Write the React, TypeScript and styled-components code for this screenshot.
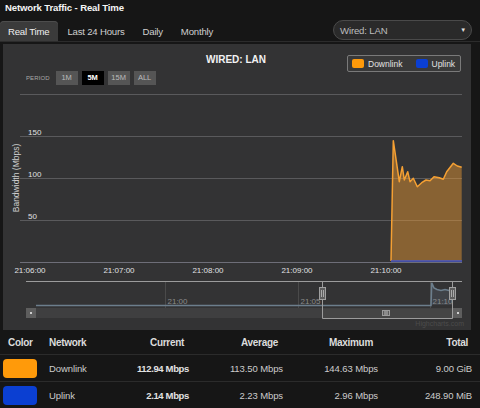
import React from 'react';
import styled, { createGlobalStyle } from 'styled-components';

const GlobalStyle = createGlobalStyle`
  html, body { margin: 0; padding: 0; background: #161616; }
  body { font-family: "Liberation Sans", Arial, sans-serif; color: #ccc; }
`;

const Page = styled.div`
  width: 480px;
  height: 408px;
  overflow: hidden;
  background: #161616;
`;

const Title = styled.div`
  height: 17px;
  box-sizing: border-box;
  padding: 1px 0 0 5px;
  font-size: 9.6px;
  line-height: 13px;
  letter-spacing: -0.15px;
  font-weight: bold;
  color: #f4f4f4;
`;

const TabBar = styled.div`
  height: 25px;
  box-sizing: border-box;
  display: flex;
  align-items: flex-end;
  justify-content: space-between;
  border-bottom: 1px solid #2c2c2c;
`;

const Tabs = styled.div`
  display: flex;
  align-items: flex-end;
`;

const Tab = styled.div<{ $active?: boolean }>`
  height: 20px;
  line-height: 21px;
  padding: 0 9px 0 8px;
  margin-right: 1px;
  font-size: 9.6px;
  letter-spacing: -0.2px;
  color: ${(p) => (p.$active ? '#f0f0f0' : '#cfcfcf')};
  background: ${(p) => (p.$active ? '#3b3b3b' : 'transparent')};
  border-radius: 4px 4px 0 0;
  box-shadow: ${(p) => (p.$active ? 'inset 0 1px 0 #4d4d4d' : 'none')};
`;

const Dropdown = styled.div`
  width: 139px;
  height: 20px;
  box-sizing: border-box;
  margin: 0 8px 1px 0;
  padding: 0 5px 0 6px;
  display: flex;
  align-items: center;
  justify-content: space-between;
  border: 1px solid #4a4a4a;
  border-radius: 10px;
  background: #2a2a2a;
  font-size: 9.6px;
  letter-spacing: -0.15px;
  color: #bdbdbd;
`;

const Caret = styled.span`
  font-size: 6px;
  color: #e0e0e0;
`;

const Panel = styled.div`
  margin: 2px 0 0 3px;
  width: 468px;
  height: 286px;
  background: #333334;
  display: flex;
  flex-direction: column;
`;

const ChartHeader = styled.div`
  height: 44px;
  box-sizing: border-box;
  padding: 9px 10px 0 10px;
  display: grid;
  grid-template-columns: 1fr;
  grid-template-rows: 16px 14px;
  row-gap: 2px;
`;

const ChartTitle = styled.div`
  grid-area: 1 / 1;
  justify-self: center;
  margin-right: 2px;
  font-size: 10px;
  line-height: 14px;
  font-weight: bold;
  color: #f2f2f2;
`;

const Legend = styled.div`
  grid-area: 1 / 1 / span 2 / 1;
  justify-self: end;
  align-self: start;
  margin-top: 2px;
  width: 114px;
  height: 17px;
  box-sizing: border-box;
  padding: 0 4px;
  display: flex;
  align-items: center;
  border: 1px solid #7a7a7a;
  border-radius: 2px;
  background: #393939;
  font-size: 8.5px;
  color: #e2e2e2;
`;

const LegendItem = styled.span`
  display: flex;
  align-items: center;
  gap: 4px;
  & + & { margin-left: 13px; }
`;

const LegendSwatch = styled.span<{ $color: string }>`
  width: 12px;
  height: 9px;
  border-radius: 2px;
  background: ${(p) => p.$color};
`;

const PeriodRow = styled.div`
  grid-area: 2 / 1;
  justify-self: start;
  margin-left: 13px;
  display: flex;
  align-items: center;
  gap: 4px;
`;

const PeriodLabel = styled.span`
  font-size: 6px;
  letter-spacing: 0.1px;
  color: #a8a8a8;
  margin-right: 2px;
`;

const PeriodButton = styled.span<{ $active?: boolean }>`
  width: 22px;
  height: 14px;
  line-height: 14px;
  text-align: center;
  font-size: 7.5px;
  font-weight: ${(p) => (p.$active ? 'bold' : 'normal')};
  color: ${(p) => (p.$active ? '#ffffff' : '#bcbcbc')};
  background: ${(p) => (p.$active ? '#000000' : '#555555')};
`;

const ChartSvg = styled.svg`
  display: block;
  font-family: "Liberation Sans", Arial, sans-serif;
`;

const Table = styled.table`
  margin-top: 1px;
  width: 480px;
  border-collapse: collapse;
  table-layout: fixed;
  font-size: 9.5px;
  letter-spacing: -0.1px;
  color: #cfcfcf;
`;

const HeadCell = styled.th<{ $align?: string; $pad?: string }>`
  height: 23px;
  padding: ${(p) => p.$pad || '0 8px 0 0'};
  text-align: ${(p) => p.$align || 'right'};
  font-size: 10px;
  letter-spacing: -0.3px;
  font-weight: bold;
  color: #dcdcdc;
  border-bottom: 1px solid #2b2b2b;
`;

const Cell = styled.td<{ $align?: string; $pad?: string; $bold?: boolean }>`
  height: 26px;
  padding: ${(p) => p.$pad || '0 3px 0 0'};
  text-align: ${(p) => p.$align || 'right'};
  font-weight: ${(p) => (p.$bold ? 'bold' : 'normal')};
  letter-spacing: ${(p) => (p.$bold ? '-0.35px' : '-0.1px')};
  color: ${(p) => (p.$bold ? '#e2e2e2' : '#cccccc')};
  border-bottom: 1px solid #2b2b2b;
`;

const Swatch = styled.div<{ $color: string }>`
  width: 34px;
  height: 19px;
  border-radius: 4px;
  background: ${(p) => p.$color};
`;

const ORANGE = '#ff9a0a';
const BLUE = '#0b3fd2';

const downlink: [number, number][] = [
  [393.3, 140.7], [399.3, 181.7], [402.3, 166.7], [404.3, 180], [407.7, 171.7],
  [410, 181.7], [413.3, 178.3], [417.3, 186.7], [421.7, 182.7], [426, 180],
  [430, 180.7], [434, 176.7], [439.3, 177.7], [443.3, 179.3], [446.7, 171.7],
  [453.3, 163.3], [457.3, 166], [461.7, 167.3],
];

const lineD = 'M391 261 ' + downlink.map(([x, y]) => `L${x} ${y}`).join(' ');
const areaD = lineD + ' L461.7 261 Z';

const yTicks = [
  { y: 136.5, label: '150' },
  { y: 178.5, label: '100' },
  { y: 220.5, label: '50' },
];

const xTicks = [
  { x: 30, label: '21:06:00' },
  { x: 119, label: '21:07:00' },
  { x: 208, label: '21:08:00' },
  { x: 297, label: '21:09:00' },
  { x: 386, label: '21:10:00' },
];

const navTicks = [
  { x: 165.5, label: '21:00' },
  { x: 298.5, label: '21:05' },
  { x: 430.5, label: '21:10' },
];

const Handle = ({ x }: { x: number }) => (
  <g>
    <rect x={x - 3} y={287.5} width={6} height={12} fill="#5e5e5e" stroke="#a0a0a0" />
    <line x1={x - 1} y1={290} x2={x - 1} y2={297} stroke="#aaa" />
    <line x1={x + 1} y1={290} x2={x + 1} y2={297} stroke="#aaa" />
  </g>
);

const Chart = () => (
  <ChartSvg width={468} height={242} viewBox="3 88 468 242">
    {[94.5, 136.5, 178.5, 220.5].map((y) => (
      <line key={y} x1={20} y1={y} x2={462} y2={y} stroke="#5a5a5c" />
    ))}
    <line x1={20} y1={262.5} x2={462} y2={262.5} stroke="#6e6e78" />
    {yTicks.map((t) => (
      <text key={t.label} x={28} y={t.y - 2} fontSize={8} fill="#e0e0e3">
        {t.label}
      </text>
    ))}
    {xTicks.map((t) => (
      <text key={t.label} x={t.x} y={273} fontSize={8} fill="#e0e0e3" textAnchor="middle">
        {t.label}
      </text>
    ))}
    <text
      x={19}
      y={178}
      fontSize={8.5}
      fill="#cfcfcf"
      textAnchor="middle"
      transform="rotate(-90 19 178)"
    >
      Bandwidth (Mbps)
    </text>

    <path d={areaD} fill="rgba(240,155,50,0.45)" />
    <path d={lineD} fill="none" stroke="#f5a033" strokeWidth={1.5} strokeLinejoin="round" />
    <line x1={391} y1={261} x2={462} y2={261} stroke="#4a58c8" strokeWidth={1.5} />

    {/* navigator */}
    {navTicks.map((t) => (
      <g key={t.label}>
        <line x1={t.x} y1={281} x2={t.x} y2={308} stroke="#4a4a4a" />
        <text x={t.x + 2} y={304} fontSize={8} fill="#8a8a8a">
          {t.label}
        </text>
      </g>
    ))}
    <path
      d="M431 305 L431.7 282.7 L434 288 L437 289.5 L441 290.5 L445 289.5 L449 290.5 L452 290 L452 305 Z"
      fill="rgba(120,140,160,0.18)"
    />
    <path
      d="M36 305.5 H431 L431.7 282.7 L434 288 L437 289.5 L441 290.5 L445 289.5 L449 290.5 L452 290"
      fill="none"
      stroke="#6c7e8c"
      strokeWidth={1.6}
    />

    {/* scrollbar */}
    <rect x={36} y={308} width={420} height={10} fill="#3f3f40" />
    <rect x={26} y={308} width={10} height={10} fill="#5e5e5e" />
    <rect x={30} y={312} width={2} height={2} fill="#cfcfcf" />
    <rect x={453} y={308} width={9} height={10} fill="#5e5e5e" />
    <rect x={457} y={312} width={2} height={2} fill="#cfcfcf" />
    <rect x={322.5} y={308.5} width={130} height={9.5} fill="#454545" />
    <rect x={382.5} y={310.5} width={7} height={5} fill="#5a5a5a" stroke="#9a9a9a" />
    <line x1={385} y1={311} x2={385} y2={315} stroke="#bbb" />
    <line x1={387} y1={311} x2={387} y2={315} stroke="#bbb" />

    <path
      d="M26 281.5 H462 M322.5 281.5 V318.5 H452.5 V281.5"
      fill="none"
      stroke="#9c9c9c"
    />
    <Handle x={322.5} />
    <Handle x={452.5} />

    <text x={464} y={326} fontSize={7} fill="#4c4c4c" textAnchor="end">
      Highcharts.com
    </text>
  </ChartSvg>
);

const rows = [
  {
    color: ORANGE,
    name: 'Downlink',
    current: '112.94 Mbps',
    average: '113.50 Mbps',
    maximum: '144.63 Mbps',
    total: '9.00 GiB',
  },
  {
    color: BLUE,
    name: 'Uplink',
    current: '2.14 Mbps',
    average: '2.23 Mbps',
    maximum: '2.96 Mbps',
    total: '248.90 MiB',
  },
];

export default function App() {
  return (
    <Page>
      <GlobalStyle />
      <Title>Network Traffic - Real Time</Title>
      <TabBar>
        <Tabs>
          <Tab $active>Real Time</Tab>
          <Tab>Last 24 Hours</Tab>
          <Tab>Daily</Tab>
          <Tab>Monthly</Tab>
        </Tabs>
        <Dropdown>
          <span>Wired: LAN</span>
          <Caret>▼</Caret>
        </Dropdown>
      </TabBar>

      <Panel>
        <ChartHeader>
          <ChartTitle>WIRED: LAN</ChartTitle>
          <Legend>
            <LegendItem>
              <LegendSwatch $color={ORANGE} />
              Downlink
            </LegendItem>
            <LegendItem>
              <LegendSwatch $color={BLUE} />
              Uplink
            </LegendItem>
          </Legend>
          <PeriodRow>
            <PeriodLabel>PERIOD</PeriodLabel>
            <PeriodButton>1M</PeriodButton>
            <PeriodButton $active>5M</PeriodButton>
            <PeriodButton>15M</PeriodButton>
            <PeriodButton>ALL</PeriodButton>
          </PeriodRow>
        </ChartHeader>
        <Chart />
      </Panel>

      <Table>
        <colgroup>
          <col style={{ width: 44 }} />
          <col style={{ width: 76 }} />
          <col style={{ width: 72 }} />
          <col style={{ width: 94 }} />
          <col style={{ width: 95 }} />
          <col style={{ width: 99 }} />
        </colgroup>
        <thead>
          <tr>
            <HeadCell $align="left" $pad="0 0 0 8px">Color</HeadCell>
            <HeadCell $align="left" $pad="0 0 0 5px">Network</HeadCell>
            <HeadCell>Current</HeadCell>
            <HeadCell>Average</HeadCell>
            <HeadCell>Maximum</HeadCell>
            <HeadCell $pad="0 12px 0 0">Total</HeadCell>
          </tr>
        </thead>
        <tbody>
          {rows.map((r) => (
            <tr key={r.name}>
              <Cell $align="left" $pad="0 0 0 3px">
                <Swatch $color={r.color} />
              </Cell>
              <Cell $align="left" $pad="0 0 0 5px">{r.name}</Cell>
              <Cell $bold>{r.current}</Cell>
              <Cell>{r.average}</Cell>
              <Cell>{r.maximum}</Cell>
              <Cell $pad="0 8px 0 0">{r.total}</Cell>
            </tr>
          ))}
        </tbody>
      </Table>
    </Page>
  );
}
